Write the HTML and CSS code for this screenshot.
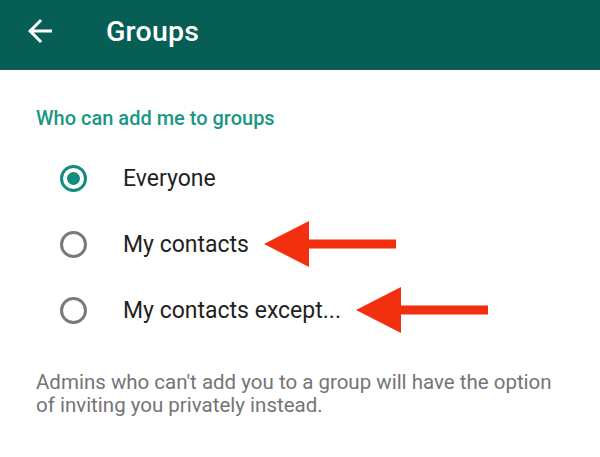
FILE: index.html
```html
<!DOCTYPE html>
<html lang="en">
<head>
    <meta charset="UTF-8">
    <meta name="viewport" content="width=device-width, initial-scale=1.0">
    <title>Groups</title>
    <link rel="stylesheet" href="styles.css">
</head>
<body>
    <!-- Toolbar -->
    <header class="toolbar">
        <button class="toolbar-back" aria-label="Back">
            <svg viewBox="0 0 24 24" width="36" height="36">
                <path d="M20 11H7.83l5.59-5.59L12 4l-8 8 8 8 1.41-1.41L7.83 13H20v-2z" fill="#fff"/>
            </svg>
        </button>
        <h1 class="toolbar-title">Groups</h1>
    </header>

    <!-- Settings -->
    <main class="settings">
        <h2 class="section-title">Who can add me to groups</h2>

        <div class="options">
            <label class="option">
                <span class="radio checked"></span>
                <span class="option-label">Everyone</span>
            </label>
            <label class="option">
                <span class="radio"></span>
                <span class="option-label">My contacts</span>
                <svg class="pointer" viewBox="0 0 132 46" width="132" height="46">
                    <polygon points="0,23 45,0 45,46" />
                    <rect x="44" y="18.5" width="88" height="9" />
                </svg>
            </label>
            <label class="option">
                <span class="radio"></span>
                <span class="option-label">My contacts except...</span>
                <svg class="pointer" viewBox="0 0 132 46" width="132" height="46">
                    <polygon points="0,23 45,0 45,46" />
                    <rect x="44" y="18.5" width="88" height="9" />
                </svg>
            </label>
        </div>

        <p class="hint">Admins who can't add you to a group will have the option of inviting you privately instead.</p>
    </main>
</body>
</html>
```

FILE: styles.css
```css
/* Base */
body {
    margin: 0;
    background: #fff;
    font-family: Roboto, 'Noto Sans', sans-serif;
    color: #1f1f1f;
}

/* Toolbar */
.toolbar {
    height: 70px;
    background: #075e54;
    display: flex;
    align-items: center;
    padding-left: 22px;
    box-sizing: border-box;
}

.toolbar-back {
    background: none;
    border: none;
    padding: 0;
    width: 36px;
    height: 36px;
    display: flex;
    margin-top: -8px;
}

.toolbar-title {
    margin: -8px 0 0 48px;
    color: #fff;
    font-size: 28.5px;
    font-weight: 500;
    letter-spacing: 0.2px;
}

/* Settings */
.settings {
    padding: 0 36px;
}

.section-title {
    margin: 36px 0 15px;
    font-size: 20px;
    line-height: 24px;
    font-weight: 500;
    color: #1b9683;
}

.options {
    display: flex;
    flex-direction: column;
}

.option {
    height: 66px;
    display: flex;
    align-items: center;
    padding-left: 24px;
}

.radio {
    width: 27px;
    height: 27px;
    box-sizing: border-box;
    border: 3px solid #7a7a7a;
    border-radius: 50%;
    display: flex;
    align-items: center;
    justify-content: center;
    flex-shrink: 0;
}

.radio.checked {
    border-color: #128c7e;
}

.radio.checked::after {
    content: "";
    width: 13px;
    height: 13px;
    border-radius: 50%;
    background: #128c7e;
}

.option-label {
    margin-left: 36px;
    font-size: 23px;
    color: #1f1f1f;
}

.pointer {
    margin-left: 15px;
    fill: #f2300f;
}

.hint {
    margin: 28px 0 0;
    font-size: 20.5px;
    line-height: 23px;
    color: #757575;
}
```
